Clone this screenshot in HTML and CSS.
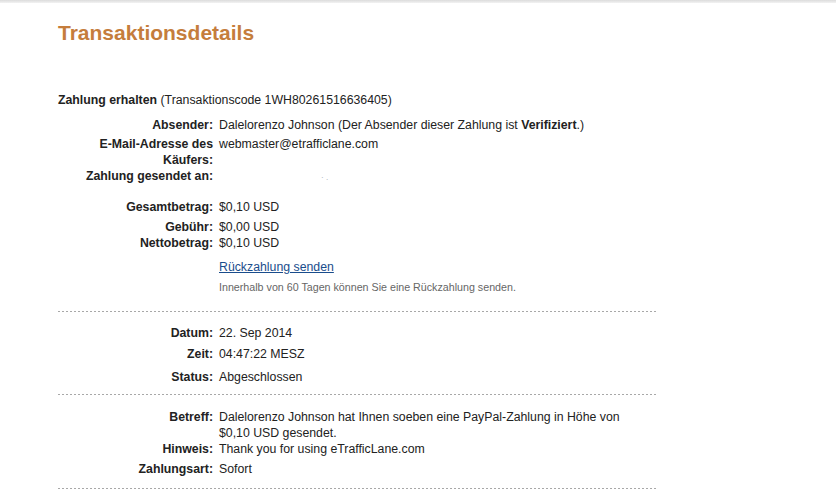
FILE: index.html
```html
<!DOCTYPE html>
<html lang="de">
  <head>
    <meta charset="UTF-8" />
    <title>Transaktionsdetails</title>
    <link rel="stylesheet" href="styles.css">
  </head>
  <body>
    <div class="topbar"></div>
    <div class="page">
      <h1 class="title">Transaktionsdetails</h1>

      <div class="block block-first">
        <p class="summary"><b>Zahlung erhalten</b> (Transaktionscode 1WH80261516636405)</p>

        <div class="row row-gap-9">
          <span class="label">Absender:</span>
          <span class="value">Dalelorenzo Johnson (Der Absender dieser Zahlung ist <b>Verifiziert</b>.)</span>
        </div>
        <div class="row row-gap-3">
          <span class="label">E-Mail-Adresse des K&auml;ufers:</span>
          <span class="value">webmaster@etrafficlane.com</span>
        </div>
        <div class="row">
          <span class="label">Zahlung gesendet an:</span>
          <span class="value"><span class="redacted">&middot; .</span></span>
        </div>

        <div class="row row-gap-13">
          <span class="label">Gesamtbetrag:</span>
          <span class="value">$0,10 USD</span>
        </div>
        <div class="row row-gap-4">
          <span class="label">Geb&uuml;hr:</span>
          <span class="value">$0,00 USD</span>
        </div>
        <div class="row">
          <span class="label">Nettobetrag:</span>
          <span class="value">$0,10 USD</span>
        </div>
        <div class="row row-gap-8">
          <span class="label"></span>
          <span class="value"><a href="#" class="refund-link">R&uuml;ckzahlung senden</a></span>
        </div>
        <div class="row row-gap-5">
          <span class="label"></span>
          <span class="value note">Innerhalb von 60 Tagen k&ouml;nnen Sie eine R&uuml;ckzahlung senden.</span>
        </div>
      </div>
      <div class="divider"></div>

      <div class="block block-date">
        <div class="row">
          <span class="label">Datum:</span>
          <span class="value">22. Sep 2014</span>
        </div>
        <div class="row row-gap-5">
          <span class="label">Zeit:</span>
          <span class="value">04:47:22 MESZ</span>
        </div>
        <div class="row row-gap-7">
          <span class="label">Status:</span>
          <span class="value">Abgeschlossen</span>
        </div>
      </div>
      <div class="divider"></div>

      <div class="block block-subject">
        <div class="row">
          <span class="label">Betreff:</span>
          <span class="value">Dalelorenzo Johnson hat Ihnen soeben eine PayPal-Zahlung in H&ouml;he von $0,10 USD gesendet.</span>
        </div>
        <div class="row">
          <span class="label">Hinweis:</span>
          <span class="value">Thank you for using eTrafficLane.com</span>
        </div>
        <div class="row row-gap-4">
          <span class="label">Zahlungsart:</span>
          <span class="value">Sofort</span>
        </div>
      </div>
      <div class="divider"></div>
    </div>
  </body>
</html>
```

FILE: styles.css
```css
body {
  margin: 0;
  padding: 0;
  background: #fff;
  font-family: "Liberation Sans", Arial, Helvetica, sans-serif;
  font-size: 12.3px;
  line-height: 16px;
  color: #222;
}

.topbar {
  height: 3px;
  background: linear-gradient(#dcdcdc, #f2f2f2);
}

.page {
  width: 599px;
  margin-left: 58px;
}

.title {
  margin: 18px 0 0;
  font-size: 21px;
  line-height: 24px;
  font-weight: bold;
  color: #c57d3c;
}

.summary {
  margin: 0;
}

.block-first {
  padding: 47px 0 17px;
}

.block-date {
  padding: 13px 0 9px;
}

.block-subject {
  padding: 14px 0 11px;
}

.divider {
  height: 1px;
  background: repeating-linear-gradient(
    to right,
    #a8a8a8 0,
    #a8a8a8 2px,
    transparent 2px,
    transparent 4px
  );
}

.row {
  display: grid;
  grid-template-columns: 155px 1fr;
  column-gap: 6px;
}

.row-gap-3 {
  margin-top: 3px;
}

.row-gap-4 {
  margin-top: 4px;
}

.row-gap-5 {
  margin-top: 5px;
}

.row-gap-7 {
  margin-top: 7px;
}

.row-gap-8 {
  margin-top: 8px;
}

.row-gap-9 {
  margin-top: 9px;
}

.row-gap-13 {
  margin-top: 13px;
}

.label {
  padding-left: 18px;
  text-align: right;
  font-weight: bold;
}

.value {
  max-width: 425px;
}

.refund-link {
  color: #1a4d8c;
  text-decoration: underline;
}

.note {
  font-size: 10.7px;
  line-height: 14px;
  color: #666;
}

.redacted {
  margin-left: 102px;
  font-size: 8px;
  color: #9aa3ad;
}
```
